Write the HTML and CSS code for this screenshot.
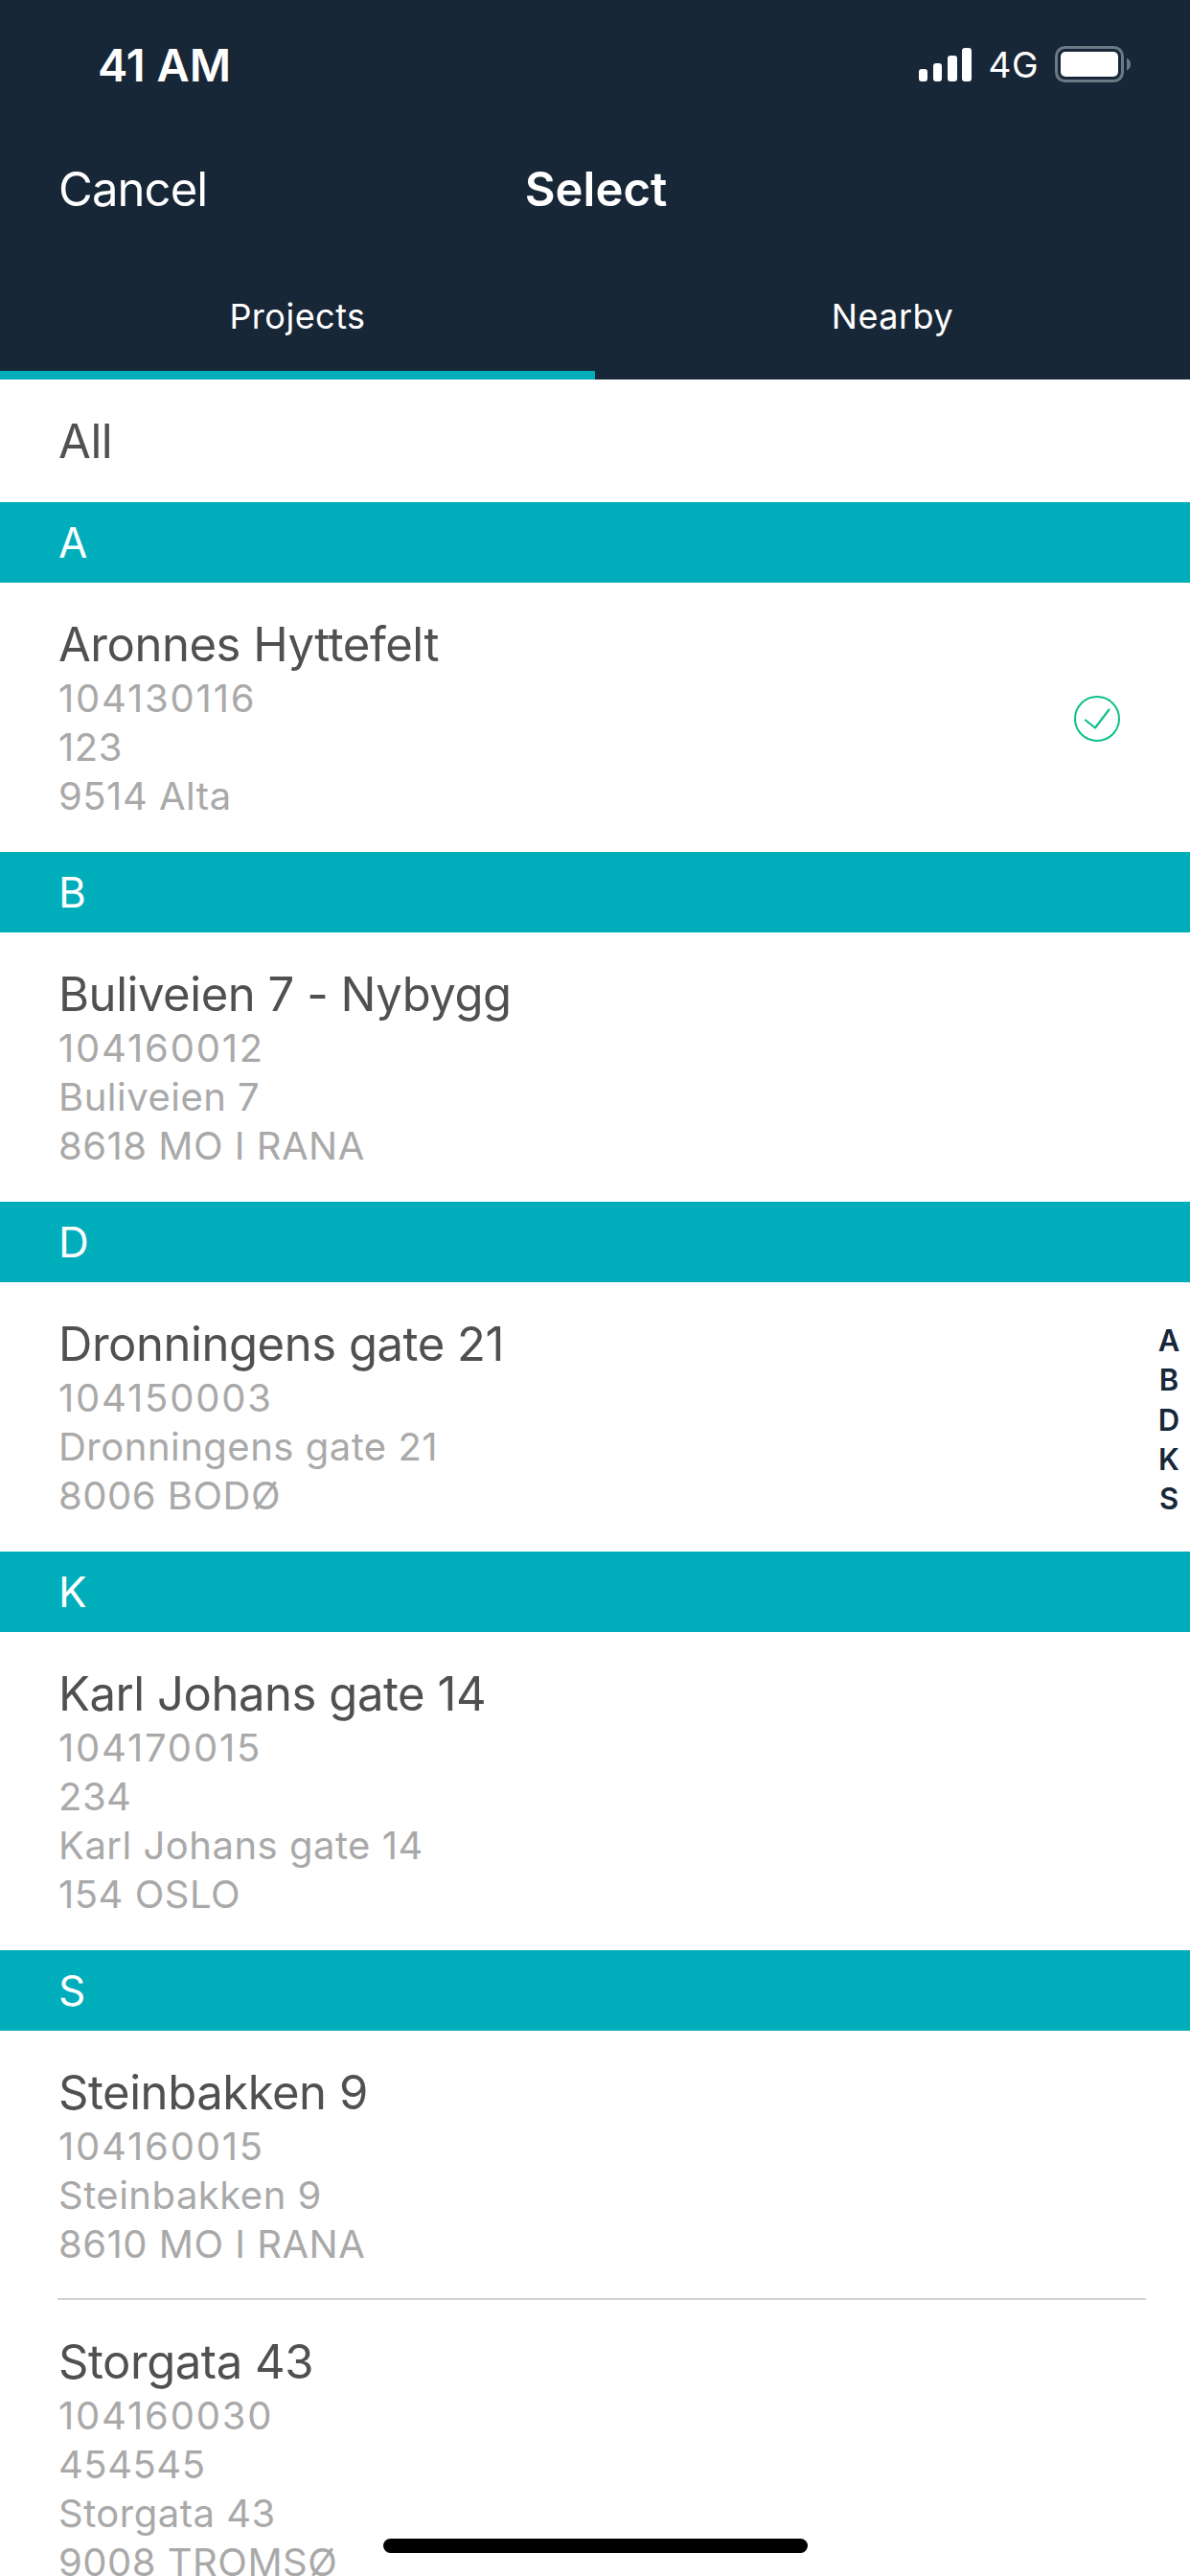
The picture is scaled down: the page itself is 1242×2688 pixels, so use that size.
FILE: index.html
```html
<!DOCTYPE html>
<html lang="en">
<head>
    <meta charset="UTF-8">
    <meta name="viewport" content="width=device-width, initial-scale=1.0">
    <title>Select project</title>
    <link rel="stylesheet" href="styles.css">
</head>
<body>
    <div id="screen">
        <div class="topbar">
            <div class="status">
                <span class="time">41 AM</span>
                <div class="status-right">
                    <svg class="signal" width="55" height="35" viewBox="0 0 55 35">
                        <rect x="0" y="22" width="9" height="13" rx="3" fill="#fff"/>
                        <rect x="15" y="16" width="9" height="19" rx="3" fill="#fff"/>
                        <rect x="30" y="8" width="10" height="27" rx="3" fill="#fff"/>
                        <rect x="45" y="0" width="10" height="35" rx="3" fill="#fff"/>
                    </svg>
                    <span class="network">4G</span>
                    <svg class="battery" width="80" height="38" viewBox="0 0 80 38">
                        <rect x="1.5" y="1.5" width="69" height="35" rx="9" fill="none" stroke="#6d7985" stroke-width="3"/>
                        <rect x="6" y="6" width="60" height="26" rx="5" fill="#fff"/>
                        <path d="M75 12.5 C78 14 79 16.5 79 19 C79 21.5 78 24 75 25.5 Z" fill="#6d7985"/>
                    </svg>
                </div>
            </div>
            <div class="nav">
                <span class="cancel">Cancel</span>
                <span class="title">Select</span>
            </div>
            <div class="tabs">
                <div class="tab active">Projects</div>
                <div class="tab">Nearby</div>
            </div>
        </div>

        <div class="all-row">All</div>

        <div class="section">A</div>
        <div class="project selected">
            <div class="info">
                <div class="name">Aronnes Hyttefelt</div>
                <div class="line code">104130116</div>
                <div class="line">123</div>
                <div class="line">9514 Alta</div>
            </div>
            <svg class="check" width="50" height="50" viewBox="0 0 50 50">
                <circle cx="25" cy="25" r="23" fill="none" stroke="#0dc08b" stroke-width="2"/>
                <path d="M13 26.5 L23 34.5 L37.5 15.5" fill="none" stroke="#0dc08b" stroke-width="2.2" stroke-linecap="round" stroke-linejoin="round"/>
            </svg>
        </div>

        <div class="section">B</div>
        <div class="project">
            <div class="info">
                <div class="name">Buliveien 7 - Nybygg</div>
                <div class="line code">104160012</div>
                <div class="line">Buliveien 7</div>
                <div class="line">8618 MO I RANA</div>
            </div>
        </div>

        <div class="section">D</div>
        <div class="project">
            <div class="info">
                <div class="name">Dronningens gate 21</div>
                <div class="line code">104150003</div>
                <div class="line">Dronningens gate 21</div>
                <div class="line">8006 BODØ</div>
            </div>
        </div>

        <div class="section">K</div>
        <div class="project">
            <div class="info">
                <div class="name">Karl Johans gate 14</div>
                <div class="line code">104170015</div>
                <div class="line">234</div>
                <div class="line">Karl Johans gate 14</div>
                <div class="line">154 OSLO</div>
            </div>
        </div>

        <div class="section">S</div>
        <div class="project">
            <div class="info">
                <div class="name">Steinbakken 9</div>
                <div class="line code">104160015</div>
                <div class="line">Steinbakken 9</div>
                <div class="line">8610 MO I RANA</div>
            </div>
        </div>
        <div class="divider"></div>
        <div class="project">
            <div class="info">
                <div class="name">Storgata 43</div>
                <div class="line code">104160030</div>
                <div class="line">454545</div>
                <div class="line">Storgata 43</div>
                <div class="line">9008 TROMSØ</div>
            </div>
        </div>

        <div class="index">
            <span>A</span>
            <span>B</span>
            <span>D</span>
            <span>K</span>
            <span>S</span>
        </div>
        <div class="home-bar"></div>
    </div>
</body>
</html>
```

FILE: styles.css
```css
body {
    margin: 0;
    font-family: 'Inter', 'Liberation Sans', sans-serif;
    background-color: #fff;
}

#screen {
    position: relative;
    width: 1242px;
    height: 2688px;
    overflow: hidden;
    background-color: #fff;
}

.topbar {
    background-color: #182737;
    color: #fff;
}

.status {
    display: flex;
    align-items: center;
    justify-content: space-between;
    height: 134px;
    padding: 0 61px 0 102px;
}

.time {
    font-size: 47px;
    font-weight: 600;
}

.status-right {
    display: flex;
    align-items: center;
    gap: 17px;
}

.network {
    font-size: 37px;
    letter-spacing: 0.5px;
}

.nav {
    position: relative;
    display: flex;
    align-items: center;
    justify-content: center;
    height: 126px;
    font-size: 49px;
}

.cancel {
    position: absolute;
    left: 61px;
    letter-spacing: -0.9px;
}

.title {
    font-weight: 600;
    margin-left: 2px;
}

.tabs {
    display: flex;
    height: 136px;
}

.tab {
    flex: 1;
    padding-top: 48px;
    box-sizing: border-box;
    text-align: center;
    font-size: 36px;
    letter-spacing: 0.5px;
}

.tab.active {
    border-bottom: 9px solid #00adbb;
}

.all-row {
    height: 128px;
    padding-left: 61px;
    line-height: 130px;
    font-size: 49px;
    letter-spacing: -0.4px;
    color: #505050;
}

.section {
    height: 84px;
    padding-left: 61px;
    line-height: 84px;
    font-size: 44px;
    color: #fff;
    background-color: #00adbb;
}

.project {
    display: flex;
    align-items: center;
    justify-content: space-between;
    padding: 35px 72px 33px 61px;
}

.name {
    font-size: 49px;
    line-height: 60px;
    letter-spacing: -0.45px;
    color: #505050;
}

.line {
    font-size: 40px;
    line-height: 51px;
    letter-spacing: 0.5px;
    color: #a9a9a9;
}

.line.code {
    letter-spacing: 1.8px;
}

.divider {
    height: 2px;
    margin: -2px 46px 0 60px;
    background-color: #d2d2d2;
}

.index {
    position: absolute;
    top: 1378px;
    right: 7px;
    width: 30px;
    display: flex;
    flex-direction: column;
    align-items: center;
    font-size: 31px;
    font-weight: 600;
    line-height: 41.3px;
    color: #16273a;
}

.home-bar {
    position: absolute;
    left: 400px;
    top: 2649px;
    width: 443px;
    height: 15px;
    border-radius: 8px;
    background-color: #000;
}
```
